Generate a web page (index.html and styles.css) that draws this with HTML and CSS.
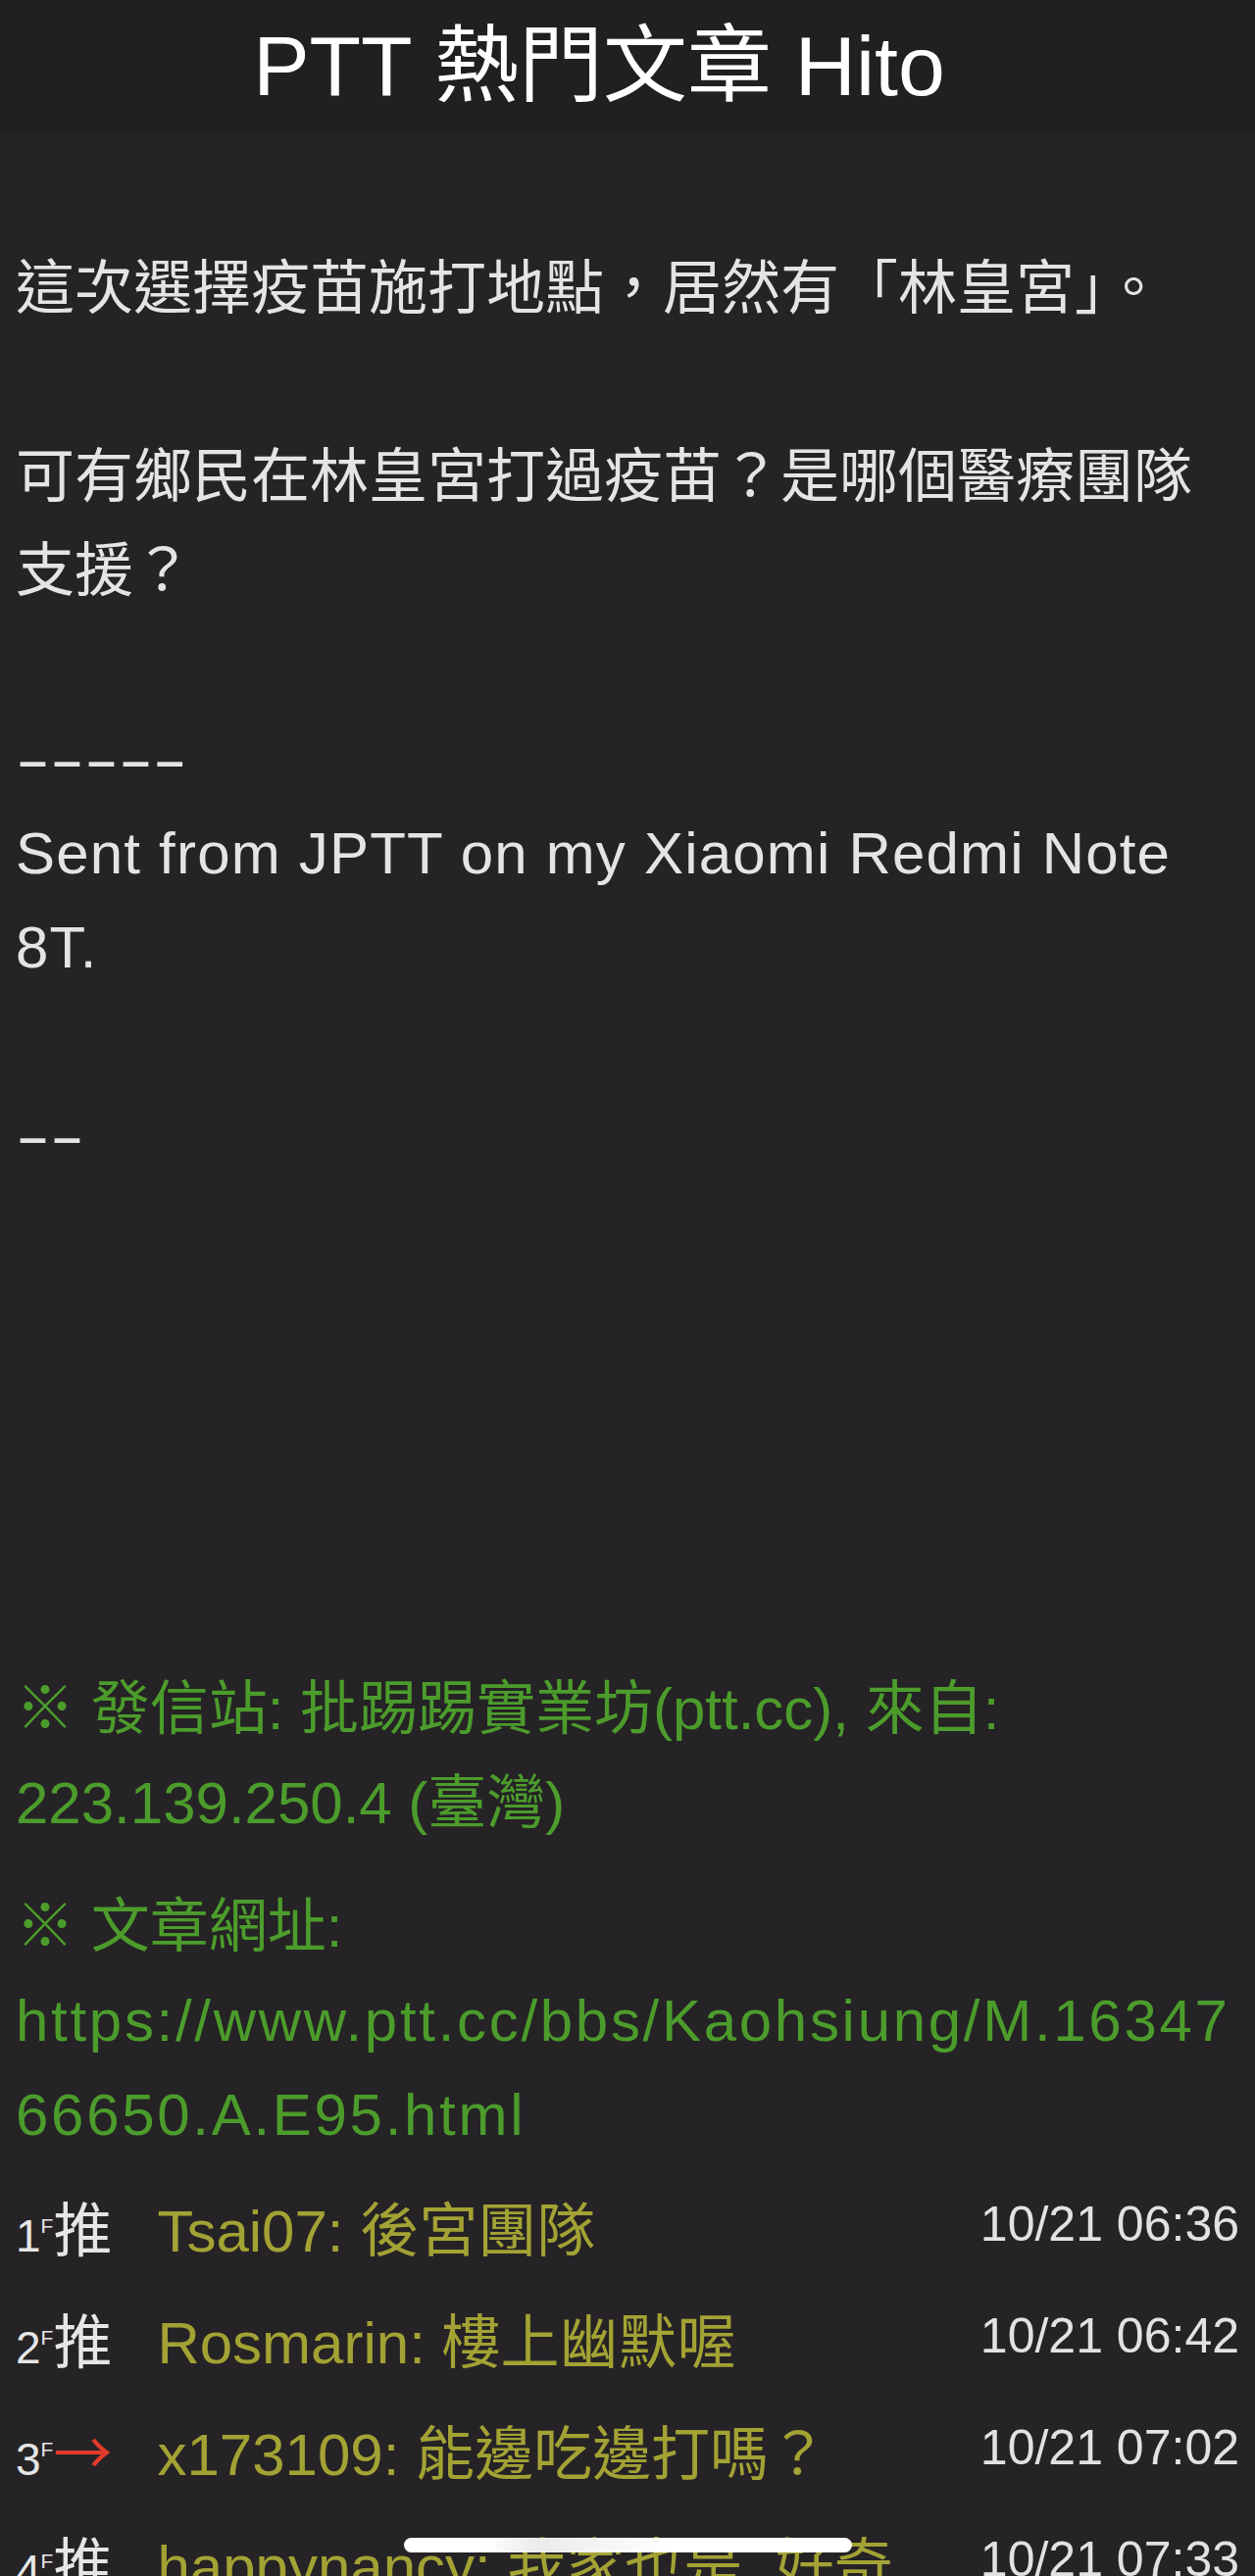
FILE: index.html
```html
<!DOCTYPE html>
<html lang="zh-Hant">
<head>
<meta charset="utf-8">
<title>PTT 熱門文章 Hito</title>
<link rel="stylesheet" href="styles.css">
</head>
<body>
<header class="topbar">
  <h1 class="title">PTT 熱門文章 Hito</h1>
</header>
<main class="article">
  <div class="content">
    <p class="para">這次選擇疫苗施打地點，居然有「林皇宮」。</p>
    <p class="para">可有鄉民在林皇宮打過疫苗？是哪個醫療團隊支援？</p>
    <p class="para"><span class="dash">-----</span><br><span class="sent">Sent from JPTT on my Xiaomi Redmi Note 8T.</span></p>
    <p class="para"><span class="dash">--</span></p>
  </div>
  <div class="sig">
    <p class="sig-line">※ 發信站: 批踢踢實業坊(ptt.cc), 來自: 223.139.250.4 (臺灣)</p>
    <p class="sig-line sig-gap">※ 文章網址:<span class="url">https://www.ptt.cc/bbs/Kaohsiung/M.1634766650.A.E95.html</span></p>
  </div>
  <ul class="comments">
    <li class="comment">
      <div class="c-main"><span class="floor">1<sup>F</sup></span><span class="tag">推</span><span class="c-text">Tsai07: 後宮團隊</span></div>
      <time class="c-date">10/21 06:36</time>
    </li>
    <li class="comment">
      <div class="c-main"><span class="floor">2<sup>F</sup></span><span class="tag">推</span><span class="c-text">Rosmarin: 樓上幽默喔</span></div>
      <time class="c-date">10/21 06:42</time>
    </li>
    <li class="comment">
      <div class="c-main"><span class="floor">3<sup>F</sup></span><span class="tag tag-arrow">→</span><span class="c-text">x173109: 能邊吃邊打嗎？</span></div>
      <time class="c-date">10/21 07:02</time>
    </li>
    <li class="comment">
      <div class="c-main"><span class="floor">4<sup>F</sup></span><span class="tag">推</span><span class="c-text">happynancy: 我家也是, 好奇</span></div>
      <time class="c-date">10/21 07:33</time>
    </li>
  </ul>
</main>
<div class="home-indicator"></div>
</body>
</html>
```
FILE: styles.css
```css
html, body {
  margin: 0;
  padding: 0;
  height: 2628px;
  overflow: hidden;
}
body {
  background: #252325;
  color: #e4e4e4;
  font-family: "Liberation Sans", "Noto Sans CJK TC", sans-serif;
}
.topbar {
  height: 135px;
  background: #202020;
  display: flex;
  align-items: center;
  justify-content: center;
  padding-right: 58px;
}
.title {
  margin: 0;
  font-weight: normal;
  font-size: 86px;
  line-height: 135px;
  color: #ffffff;
  font-family: "Liberation Sans", "Noto Sans CJK TC", sans-serif;
}
.article {
  padding: 112px 16px 0;
}
.content {
  font-size: 60px;
  line-height: 96px;
}
.para {
  margin: 0 0 96px;
}
.para:last-child {
  margin-bottom: 0;
}
.dash {
  display: inline-block;
  transform: scaleX(1.75);
  transform-origin: left center;
}
.sent {
  letter-spacing: 1.2px;
}
.sig {
  margin-top: 489px;
  color: #4c9c2c;
  font-size: 60px;
  line-height: 96px;
}
.sig-line {
  margin: 0;
}
.sig-gap {
  margin-top: 30px;
}
.url {
  display: block;
  word-break: break-all;
  letter-spacing: 2.7px;
}
.comments {
  list-style: none;
  margin: 14px 0 0;
  padding: 0;
}
.comment {
  display: flex;
  justify-content: space-between;
  align-items: flex-start;
  height: 114px;
}
.c-main {
  font-size: 60px;
  line-height: 114px;
  white-space: nowrap;
}
.floor {
  font-size: 46px;
  line-height: 1;
  color: #e6e6e6;
  letter-spacing: -2px;
}
.floor sup {
  font-size: 21px;
  line-height: 0;
  vertical-align: 19px;
  letter-spacing: 0;
  margin-left: 2px;
}
.tag {
  font-family: "Noto Sans CJK TC", sans-serif;
  font-size: 60px;
  line-height: 1;
  color: #e6e6e6;
}
.tag-arrow {
  color: #e33b2b;
}
.c-text {
  margin-left: 46px;
  color: #a3a234;
}
.c-date {
  font-size: 50px;
  line-height: 98px;
  color: #e2e2e2;
  white-space: nowrap;
}
.home-indicator {
  position: fixed;
  left: 412px;
  top: 2589px;
  width: 457px;
  height: 15px;
  border-radius: 8px;
  background: linear-gradient(90deg, #ffffff 0%, #ffffff 18%, #ebebeb 30%, #ffffff 60%, #ffffff 100%);
}
```
